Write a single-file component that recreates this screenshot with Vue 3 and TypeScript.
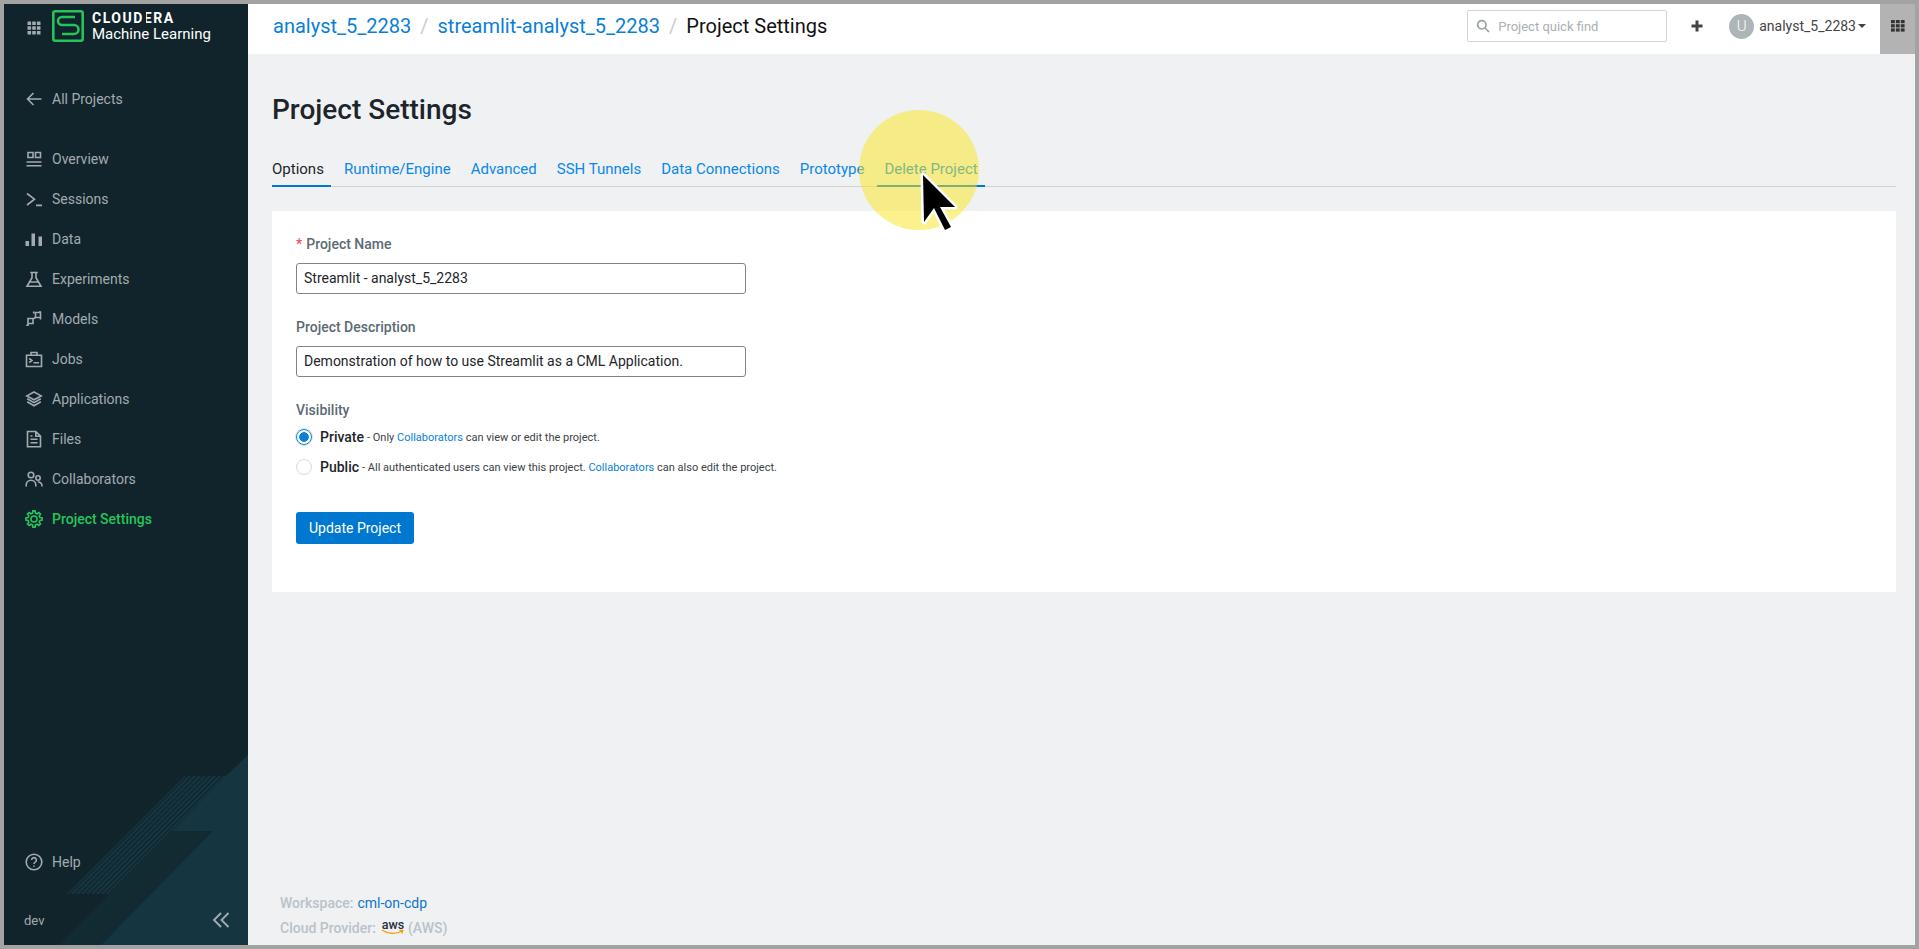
<script setup lang="ts">
interface NavItem {
  label: string
  d: string
  fill?: boolean
  active?: boolean
}

// gear outline, teeth computed around the centre of an 18px box
const gearPath = (() => {
  const pts: string[] = []
  const teeth = 8
  for (let i = 0; i < teeth; i++) {
    const a = (i / teeth) * Math.PI * 2
    const step = Math.PI / teeth
    const list: [number, number][] = [
      [6.1, a - step * 0.62],
      [8.2, a - step * 0.34],
      [8.2, a + step * 0.34],
      [6.1, a + step * 0.62]
    ]
    for (const [r, t] of list) {
      pts.push(`${(9 + r * Math.cos(t)).toFixed(2)} ${(9 + r * Math.sin(t)).toFixed(2)}`)
    }
  }
  return `M${pts.join('L')}zM12 9a3 3 0 1 1-6 0 3 3 0 0 1 6 0z`
})()

const navItems: NavItem[] = [
  { label: 'Overview', d: 'M3 2.5h5v5H3zM10.5 2.5h5v5h-5zM1.5 12h15M1.5 15.8h15' },
  { label: 'Sessions', d: 'M2 3.5l7.5 5.7L2 15M11 15.4h6' },
  { label: 'Data', d: 'M0.5 11h3.5v5H.5zM6.5 3.5H10V16H6.5zM13.5 6.5H17V16h-3.5z', fill: true },
  { label: 'Experiments', d: 'M5.2 2.5h7.6M7 2.5v5.2L2 16.3h14L11 7.7V2.5M4.8 12h8.4' },
  { label: 'Models', d: 'M10.5 2.5h5v5h-5zM3 8.5h5v5H3zM8 9l2.500-1.500M8.700 1.500v2M15.500 7.500v2M1.200 15.200H3M3 13.500v2.500M15 1v2' },
  { label: 'Jobs', d: 'M1.5 5.2h15v11.3h-15zM6 5.2V2.5h6v2.7M4.3 8.5l2.6 2-2.6 2M8.5 12.8H14' },
  { label: 'Applications', d: 'M9 2l7.2 3.9L9 9.8 1.8 5.9zM2.2 8.8L9 12.6l6.8-3.8M2.2 11.8L9 15.8l6.8-4' },
  { label: 'Files', d: 'M2.5 1.5h8.3l4.7 4.7v10.6h-13zM10.8 1.5v4.7h4.7M5.5 6h2M5.5 9.3h7M5.5 12.8h7' },
  { label: 'Collaborators', d: 'M8.8 5a2.8 2.8 0 1 1-5.6 0 2.8 2.8 0 0 1 5.6 0zM1.2 16.5V15a4.8 4.8 0 0 1 9.6 0v1.5M15.2 8a2.2 2.2 0 1 1-4.4 0 2.2 2.2 0 0 1 4.4 0zM12.8 12a3.6 3.6 0 0 1 4.2 3.5v1' },
  { label: 'Project Settings', d: gearPath, active: true }
]

const tabs = ['Options', 'Runtime/Engine', 'Advanced', 'SSH Tunnels', 'Data Connections', 'Prototype', 'Delete Project']

// hatch lines for the sidebar decoration
const hatch = Array.from({ length: 11 }, (_, i) => `M${180 + i * 5} 776L${62 + i * 5} 894`)
</script>

<template>
  <div class="frame">
    <aside class="sidebar">
      <svg class="decor" width="244" height="195" viewBox="4 750 244 195">
        <defs>
          <clipPath id="hatch-clip"><path d="M185 776H226L108 894H67z" /></clipPath>
        </defs>
        <path d="M172 831H213L101 945H58z" fill="#122b33" />
        <path d="M248 755V945H101L213 831H172L226 776z" fill="#153641" />
        <g clip-path="url(#hatch-clip)" stroke="#153641" stroke-width="2.4">
          <path v-for="line in hatch" :key="line" :d="line" />
        </g>
      </svg>

      <div class="brand">
        <svg class="icon" viewBox="0 0 18 18" width="18" height="18">
          <g fill="#a3abb0">
            <rect v-for="n in 9" :key="n" :x="2.5 + ((n - 1) % 3) * 4.7" :y="2.5 + Math.floor((n - 1) / 3) * 4.7" width="3.6" height="3.6" rx=".5" />
          </g>
        </svg>
        <svg class="logo" width="32" height="32" viewBox="0 0 32 32" fill="none" stroke="#25c45a" stroke-width="2.6">
          <rect x="1.3" y="1.3" width="29.4" height="29.4" rx="2" />
          <path d="M23 7H10a4 4 0 0 0 0 8h12a4.5 4.5 0 0 1 0 9H10" />
        </svg>
        <div class="brand-text">
          <span class="brand-top">CLOUD<span class="brand-e">E</span>RA</span>
          <span class="brand-sub">Machine Learning</span>
        </div>
      </div>

      <a class="nav-row all-projects">
        <svg class="icon" viewBox="0 0 18 18" width="18" height="18"><path d="M16.5 9H2.5M8.5 3l-6 6 6 6" /></svg>
        All Projects
      </a>

      <nav>
        <a v-for="item in navItems" :key="item.label" class="nav-row" :class="{ active: item.active }">
          <svg class="icon" :class="{ solid: item.fill }" viewBox="0 0 18 18" width="18" height="18"><path :d="item.d" /></svg>
          {{ item.label }}
        </a>
      </nav>

      <div class="side-bottom">
        <a class="nav-row">
          <svg class="icon" viewBox="0 0 18 18" width="18" height="18">
            <circle cx="9" cy="9" r="7.8" />
            <path d="M6.6 7a2.4 2.4 0 1 1 3.6 2.1c-.8.5-1.2.9-1.2 1.9M9 12.6v1.2" />
          </svg>
          Help
        </a>
        <div class="dev-row">
          <span>dev</span>
          <svg class="icon chevrons" viewBox="0 0 18 18" width="18" height="18"><path d="M9 2L2 9l7 7M16.5 2l-7 7 7 7" /></svg>
        </div>
      </div>
    </aside>

    <div class="main">
      <header class="topbar">
        <div class="crumbs">
          <a>analyst_5_2283</a>
          <span class="sep">/</span>
          <a>streamlit-analyst_5_2283</a>
          <span class="sep">/</span>
          <span class="current">Project Settings</span>
        </div>
        <div class="search">
          <svg viewBox="0 0 14 14" width="14" height="14" fill="none" stroke="#9aa0a4" stroke-width="1.7"><circle cx="5.8" cy="5.8" r="4.2" /><path d="M9 9l4 4" /></svg>
          <span>Project quick find</span>
        </div>
        <svg class="plus" viewBox="0 0 12 12" width="12" height="12"><path d="M6 .5v11M.5 6h11" stroke="#444" stroke-width="3" /></svg>
        <div class="user">
          <span class="avatar">U</span>
          <span>analyst_5_2283</span>
          <span class="caret"></span>
        </div>
        <div class="apps">
          <svg viewBox="0 0 14 12" width="14" height="12" fill="#333">
            <template v-for="r in 3" :key="r">
              <rect v-for="c in 3" :key="c" :x="(c - 1) * 4.9" :y="(r - 1) * 4.2" width="3.8" height="3.2" />
            </template>
          </svg>
        </div>
      </header>

      <main class="page">
        <h1>Project Settings</h1>
        <div class="tabs">
          <a v-for="(tab, i) in tabs" :key="tab" class="tab" :class="{ selected: i === 0, hover: i === 6 }">{{ tab }}</a>
        </div>

        <section class="card">
          <label class="field-label"><span class="req">*</span>Project Name</label>
          <input class="text-input" type="text" value="Streamlit - analyst_5_2283" readonly />
          <label class="field-label">Project Description</label>
          <input class="text-input" type="text" value="Demonstration of how to use Streamlit as a CML Application." readonly />
          <label class="field-label">Visibility</label>
          <div class="radio-row first">
            <span class="radio on"></span>
            <b>Private</b>
            <small>- Only <a>Collaborators</a> can view or edit the project.</small>
          </div>
          <div class="radio-row">
            <span class="radio"></span>
            <b>Public</b>
            <small>- All authenticated users can view this project. <a>Collaborators</a> can also edit the project.</small>
          </div>
          <button class="primary" type="button">Update Project</button>
        </section>

        <footer class="page-foot">
          <div><b>Workspace:</b> <a>cml-on-cdp</a></div>
          <div>
            <b>Cloud Provider:</b>
            <span class="aws">
              <span class="aws-word">aws</span>
              <svg viewBox="0 0 24 6" width="24" height="6" fill="none" stroke="#f90" stroke-width="1.3"><path d="M1 1c6 4 14 4.500 20 1M18.500 1.200l3.300.3-1 3" /></svg>
            </span>
            <b>(AWS)</b>
          </div>
        </footer>
      </main>
    </div>

    <!-- screen recorder highlight and pointer -->
    <div class="spot"></div>
    <svg class="pointer" width="50" height="70" viewBox="915 165 50 70">
      <path d="M923 175L924 222L934 208L945 230L951 227L940 207L955 207z" fill="#000" stroke="#fff" stroke-width="5" stroke-linejoin="round" paint-order="stroke" />
    </svg>
  </div>
</template>

<style scoped>
.frame {
  position: relative;
  display: flex;
  box-sizing: border-box;
  height: 949px;
  padding: 4px;
  background: #a3a3a3;
  font-family: Roboto, "Liberation Sans", sans-serif;
  overflow: hidden;
}

a {
  color: #0a7fd6;
  text-decoration: none;
}

.sidebar {
  position: relative;
  display: flex;
  flex-direction: column;
  flex: none;
  width: 244px;
  background: #11242b;
  color: #a3abb0;
  font-size: 14px;
}

.decor {
  position: absolute;
  left: 0;
  bottom: 0;
}

.icon {
  flex: none;
  margin-right: 9px;
  fill: none;
  stroke: currentColor;
  stroke-width: 1.6;
}

.icon.solid {
  fill: currentColor;
  stroke: none;
}

.brand {
  display: flex;
  align-items: center;
  height: 50px;
  padding-left: 21px;
  box-sizing: border-box;
}

.brand .icon {
  stroke: none;
  margin-right: 9px;
  margin-top: -2px;
}

.logo {
  flex: none;
  margin-top: -6px;
}

.brand-text {
  display: flex;
  flex-direction: column;
  margin-left: 8px;
  margin-top: -4px;
  color: #fff;
}

.brand-top {
  font-size: 14px;
  font-weight: 700;
  letter-spacing: 1.5px;
  line-height: 15px;
}

.brand-e {
  position: relative;
  display: inline-block;
}

/* the logo's E has no upright */
.brand-e::before {
  content: "";
  position: absolute;
  left: 0;
  top: 0;
  width: 2.5px;
  height: 100%;
  background: #11242b;
}

.brand-sub {
  font-size: 15px;
  line-height: 17px;
}

.nav-row {
  position: relative;
  display: flex;
  align-items: center;
  height: 40px;
  padding-left: 21px;
  color: #a3abb0;
}

.nav-row.active {
  color: #25c45a;
  font-weight: 500;
}

.all-projects {
  margin: 25px 0 20px;
}

.side-bottom {
  position: relative;
  margin-top: auto;
}

.dev-row {
  display: flex;
  align-items: center;
  justify-content: space-between;
  height: 50px;
  margin-top: 13px;
  padding: 0 10px 0 20px;
  font-size: 13px;
}

.chevrons {
  margin-right: 8px;
  stroke-width: 1.9;
}

.main {
  display: flex;
  flex-direction: column;
  flex: 1;
  min-width: 0;
  background: #f0f1f3;
}

.topbar {
  display: flex;
  align-items: center;
  flex: none;
  height: 50px;
  padding-left: 25px;
  background: #fff;
}

.crumbs {
  display: flex;
  align-items: center;
  flex: 1;
  margin-top: -7px;
  font-size: 20px;
}

.sep {
  margin: 0 9px;
  color: #c8ccd0;
}

.current {
  color: #111;
}

.search {
  display: flex;
  align-items: center;
  gap: 8px;
  box-sizing: border-box;
  width: 200px;
  height: 32px;
  margin-top: -6px;
  padding-left: 8px;
  border: 1px solid #d2d5d8;
  border-radius: 2px;
  color: #aab0b4;
  font-size: 13px;
}

.plus {
  margin: -6px 0 0 24px;
}

.user {
  display: flex;
  align-items: center;
  margin: -6px 0 0 26px;
  color: #444;
  font-size: 14px;
}

.avatar {
  display: flex;
  align-items: center;
  justify-content: center;
  width: 25px;
  height: 25px;
  margin-right: 5px;
  border-radius: 50%;
  background: #adb5b9;
  color: #fff;
  font-size: 15px;
  font-weight: 300;
}

.caret {
  margin-left: 2px;
  border-top: 4px solid #444;
  border-left: 4px solid transparent;
  border-right: 4px solid transparent;
}

.apps {
  display: flex;
  align-items: center;
  justify-content: center;
  align-self: stretch;
  width: 35px;
  margin-left: 14px;
  background: #b3b3b3;
}

.apps svg {
  margin-top: -6px;
}

.page {
  display: flex;
  flex-direction: column;
  flex: 1;
  padding: 0 19px 0 24px;
}

h1 {
  margin: 39px 0 0;
  color: #1d252b;
  font-size: 28px;
  font-weight: 500;
  line-height: 34px;
}

.tabs {
  display: flex;
  height: 34px;
  margin-top: 25px;
  border-bottom: 1px solid #cfd3d6;
}

.tab {
  box-sizing: border-box;
  height: 35px;
  margin-right: 6px;
  padding: 0 7px;
  border-bottom: 2px solid transparent;
  color: #0a88e8;
  font-size: 15px;
  line-height: 34px;
}

.tab.selected {
  padding-left: 0;
  border-bottom-color: #0078d0;
  color: #1d252b;
}

.tab.hover {
  border-bottom-color: #0078d0;
}

.card {
  display: flex;
  flex-direction: column;
  align-items: flex-start;
  box-sizing: border-box;
  height: 381px;
  margin-top: 24px;
  padding: 23px 24px 0;
  background: #fff;
}

.field-label {
  margin-top: 24px;
  color: #5c6a75;
  font-size: 14px;
  font-weight: 500;
  line-height: 20px;
}

.field-label:first-child {
  margin-top: 0;
}

.req {
  margin-right: 4px;
  color: #ef4f5a;
}

.text-input {
  box-sizing: border-box;
  width: 450px;
  height: 31px;
  margin-top: 9px;
  margin-bottom: -1px;
  padding: 0 7px 1px;
  border: 1px solid #7a858f;
  border-radius: 3px;
  outline: none;
  color: #1d252b;
  font-family: inherit;
  font-size: 14px;
}

.radio-row {
  display: flex;
  align-items: center;
  height: 30px;
  color: #1d252b;
}

.radio-row.first {
  margin-top: 2px;
}

.radio-row b {
  margin-right: 3px;
  font-size: 14px;
  font-weight: 500;
}

.radio-row small {
  font-size: 11px;
  color: #3a4248;
}

.radio {
  box-sizing: border-box;
  width: 16px;
  height: 16px;
  margin-right: 8px;
  border: 1px solid #d7dadd;
  border-radius: 50%;
  background: #fff;
}

.radio.on {
  border-color: #0a7fd6;
  background: radial-gradient(circle, #0a7fd6 0 4.5px, #fff 5px);
  box-shadow: 0 0 0 1px #cfe6f8;
}

.primary {
  width: 118px;
  height: 32px;
  margin-top: 30px;
  padding: 0;
  border: 0;
  border-radius: 3px;
  background: #0078d0;
  color: #fff;
  font-family: inherit;
  font-size: 14px;
}

.page-foot {
  margin-top: auto;
  padding: 0 0 5px 8px;
  color: #b9c3c9;
  font-size: 14px;
}

.page-foot div {
  display: flex;
  align-items: center;
  gap: 4px;
  height: 25px;
}

.page-foot b {
  font-weight: 500;
}

.page-foot a {
  color: #0b78c8;
}

.aws {
  display: inline-flex;
  flex-direction: column;
  align-items: center;
  width: 22px;
  margin: 0 0 0 2px;
}

.aws-word {
  color: #232f3e;
  font-size: 12.5px;
  font-weight: 500;
  line-height: 10px;
}

.aws svg {
  display: block;
  margin-top: -1px;
}

.spot {
  position: absolute;
  left: 859px;
  top: 110px;
  width: 120px;
  height: 120px;
  border-radius: 50%;
  background: rgba(250, 229, 27, 0.5);
}

.pointer {
  position: absolute;
  left: 915px;
  top: 165px;
}
</style>
